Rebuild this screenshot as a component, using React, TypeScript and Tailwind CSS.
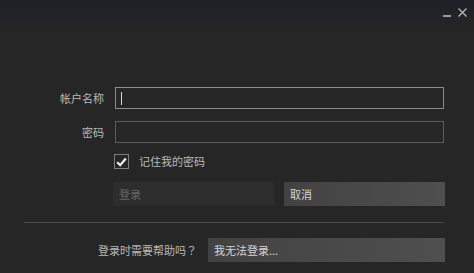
import React from "react";

export default function App() {
  const font = { fontFamily: '"Noto Sans CJK SC", "Noto Sans", sans-serif' };
  return (
    <div
      className="relative w-[474px] h-[273px] overflow-hidden bg-[linear-gradient(to_bottom,#1c1f26_0px,#222328_14px,#262626_30px)] text-[11px] leading-none"
      style={font}
    >
      {/* title bar */}
      <div className="h-[28px] flex justify-end items-start pr-[7px] pt-[8px] gap-[7px]">
        <div className="w-[8px] h-[9px] flex items-end">
          <div className="w-[8px] h-[2px] bg-[#9a9a9a]" />
        </div>
        <svg width="9" height="9" viewBox="0 0 9 9" className="block">
          <path d="M0.5 0.5 L8.5 8.5 M8.5 0.5 L0.5 8.5" stroke="#b4b4b4" strokeWidth="1.4" />
        </svg>
      </div>

      {/* form */}
      <div className="flex flex-col pt-[59px]">
        <div className="flex items-center">
          <div className="w-[104px] text-right text-[#bababa]">帐户名称</div>
          <div className="ml-[11px] w-[329px] h-[22px] border border-[#8c8c8c] bg-[#262626] flex items-center pl-[5px]">
            <div className="w-[1px] h-[13px] bg-[#d8d8d8]" />
          </div>
        </div>
        <div className="flex items-center mt-[12px]">
          <div className="w-[104px] text-right text-[#bababa]">密码</div>
          <div className="ml-[11px] w-[329px] h-[22px] border border-[#5c5c5c] bg-[#262626]" />
        </div>
        <div className="flex items-center mt-[11px] ml-[114px]">
          <div className="w-[15px] h-[15px] border border-[#7e7e7e] flex items-center justify-center">
            <svg width="11" height="10" viewBox="0 0 11 10">
              <path d="M1.2 5.2 L4.2 8.2 L9.8 1.5" fill="none" stroke="#f0f0f0" strokeWidth="2.2" />
            </svg>
          </div>
          <div className="ml-[10px] text-[#bababa]">记住我的密码</div>
        </div>
        <div className="flex mt-[13px] ml-[113px] gap-[10px]">
          <div className="w-[161px] h-[24px] bg-[#2d2d2d] text-[#666666] flex items-center pl-[6px]">登录</div>
          <div className="w-[161px] h-[24px] bg-[linear-gradient(to_right,#424242,#4f4f4f)] text-[#d6d6d6] flex items-center pl-[6px]">取消</div>
        </div>
        <div className="mt-[16px] ml-[24px] w-[420px] h-[1px] bg-[#4a4a4a]" />
        <div className="flex items-center mt-[15px]">
          <div className="w-[197px] text-right text-[#bababa]">
            登录时需要帮助吗
            <span style={{ fontFamily: '"Noto Sans CJK TC", sans-serif' }}>？</span>
          </div>
          <div className="ml-[11px] w-[237px] h-[24px] bg-[linear-gradient(to_right,#424242,#4f4f4f)] text-[#d6d6d6] flex items-center pl-[6px]">我无法登录...</div>
        </div>
      </div>
    </div>
  );
}
